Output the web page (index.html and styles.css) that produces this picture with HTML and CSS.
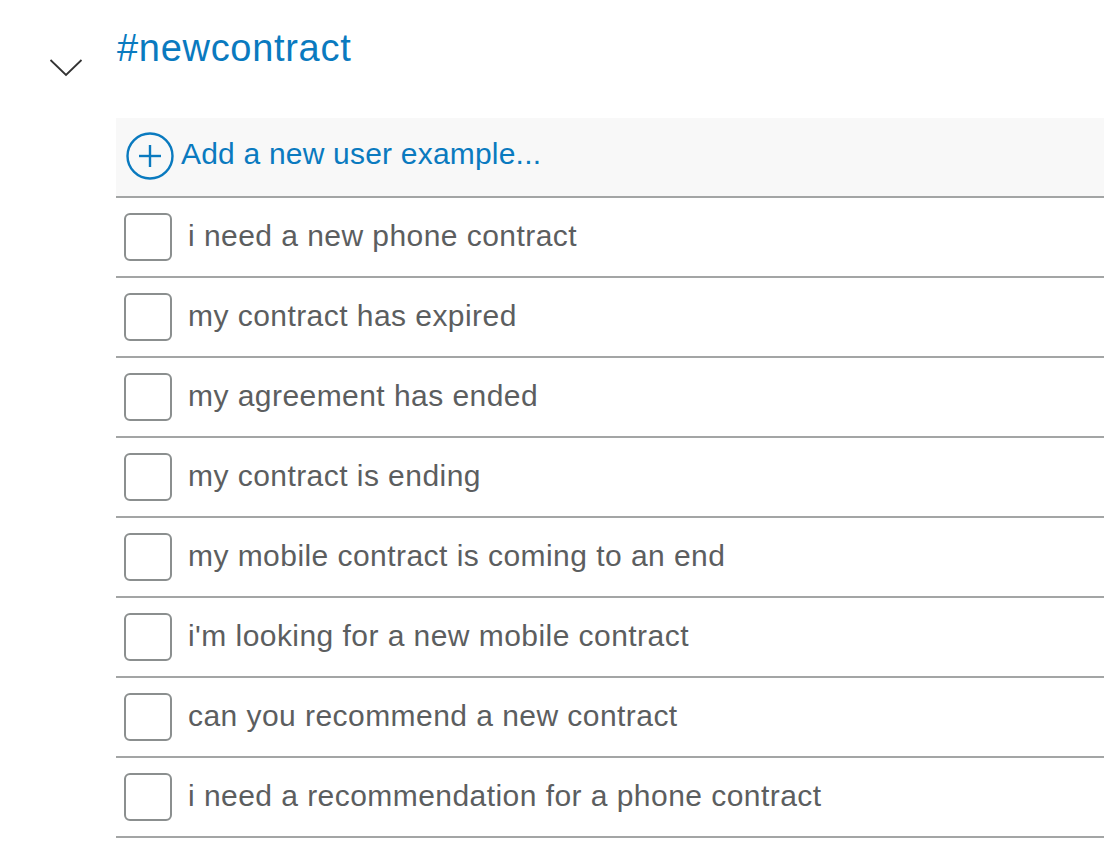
FILE: index.html
```html
<!DOCTYPE html>
<html>
<head>
<meta charset="utf-8">
<link rel="stylesheet" href="styles.css">
</head>
<body>
<div class="page">
  <div class="toggle">
    <svg width="34" height="20" viewBox="0 0 34 20"><polyline points="1.5,2 17,17 32.5,2" fill="none" stroke="#333" stroke-width="1.8"/></svg>
  </div>
  <div class="main">
    <h1 class="title">#newcontract</h1>
    <div class="list">
      <div class="add-row">
        <svg class="plus" width="48" height="48" viewBox="0 0 48 48"><circle cx="24" cy="24" r="22.5" fill="none" stroke="#0a7abf" stroke-width="2.4"/><line x1="24" y1="13" x2="24" y2="35" stroke="#0a7abf" stroke-width="2.4"/><line x1="13" y1="24" x2="35" y2="24" stroke="#0a7abf" stroke-width="2.4"/></svg>
        <span class="add-text">Add a new user example...</span>
      </div>
      <div class="row"><span class="box"></span><span class="txt">i need a new phone contract</span></div>
      <div class="row"><span class="box"></span><span class="txt">my contract has expired</span></div>
      <div class="row"><span class="box"></span><span class="txt">my agreement has ended</span></div>
      <div class="row"><span class="box"></span><span class="txt">my contract is ending</span></div>
      <div class="row"><span class="box"></span><span class="txt">my mobile contract is coming to an end</span></div>
      <div class="row"><span class="box"></span><span class="txt">i'm looking for a new mobile contract</span></div>
      <div class="row"><span class="box"></span><span class="txt">can you recommend a new contract</span></div>
      <div class="row"><span class="box"></span><span class="txt">i need a recommendation for a phone contract</span></div>
    </div>
  </div>
</div>
</body>
</html>
```
FILE: styles.css
```css
html, body {
  margin: 0;
  padding: 0;
  background: #fff;
  overflow: hidden;
}
body {
  font-family: "Liberation Sans", Arial, sans-serif;
}
.page {
  display: flex;
  width: 1104px;
  height: 852px;
}
.toggle {
  width: 116px;
  flex: none;
  padding-top: 58px;
  padding-left: 49px;
  box-sizing: border-box;
}
.toggle svg { display: block; }
.main {
  flex: 1;
  min-width: 0;
}
.title {
  margin: 0;
  height: 118px;
  box-sizing: border-box;
  padding-top: 26px;
  padding-left: 1px;
  font-size: 38px;
  font-weight: normal;
  line-height: 44px;
  color: #0a7abf;
  letter-spacing: 0.7px;
}
.list {
  display: flex;
  flex-direction: column;
}
.add-row {
  height: 78px;
  background: #f8f8f8;
  border-bottom: 2px solid #a3a5a5;
  display: flex;
  align-items: center;
  padding-left: 10px;
  gap: 7px;
}
.plus { display: block; flex: none; margin-top: -2px; }
.add-text {
  font-size: 30px;
  line-height: 36px;
  color: #0a7abf;
  letter-spacing: 0.2px;
  margin-top: -6px;
}
.row {
  height: 78px;
  border-bottom: 2px solid #a3a5a5;
  display: flex;
  align-items: center;
  padding-left: 8px;
  gap: 16px;
}
.box {
  width: 44px;
  height: 44px;
  border: 2px solid #8b8f8f;
  border-radius: 6px;
  flex: none;
}
.txt {
  font-size: 30px;
  line-height: 36px;
  color: #5c5e5f;
  letter-spacing: 0.45px;
  margin-top: -2px;
}
```
